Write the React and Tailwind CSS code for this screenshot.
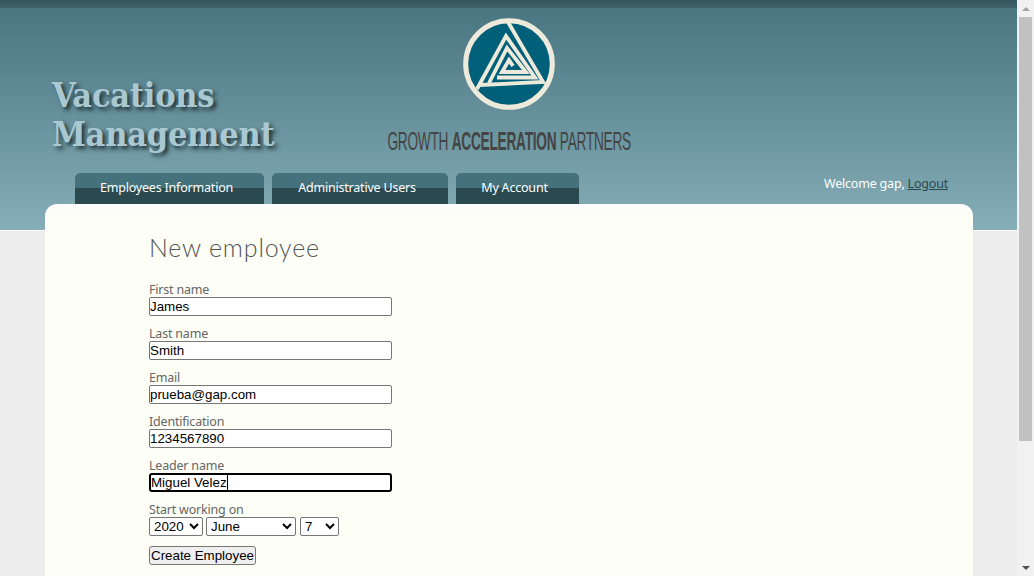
import React from 'react';

const tabs = [
  { label: 'Employees Information', width: 'w-[189px]' },
  { label: 'Administrative Users', width: 'w-[176px]' },
  { label: 'My Account', width: 'w-[123px]' },
];

const fields = [
  { label: 'First name', value: 'James' },
  { label: 'Last name', value: 'Smith' },
  { label: 'Email', value: 'prueba@gap.com' },
  { label: 'Identification', value: '1234567890' },
];

const Logo = () => (
  <svg width="94" height="94" viewBox="0 0 94 94" className="block">
    <circle cx="47" cy="47" r="43.3" fill="#00607a" stroke="#eeeadb" strokeWidth="5" />
    <g fill="none" stroke="#eeeadb" strokeWidth="3.8">
      <path d="M46 5 L81 65 L17 68" />
      <path d="M15 72 L44 19 L73 60.5 L35 60.5" />
      <path d="M27 66 L45 31 L64 55 L40 55 L47 43 L51 49" />
    </g>
  </svg>
);

const Scrollbar = () => (
  <div className="flex flex-col items-center w-[17px] h-[576px] bg-[#f1f1f1] shrink-0">
    <div className="h-[17px] flex items-center justify-center">
      <div className="w-0 h-0 border-x-[4px] border-x-transparent border-b-[4px] border-b-[#a3a3a3]" />
    </div>
    <div className="w-[13px] h-[424px] bg-[#c1c1c1]" />
    <div className="flex-1" />
    <div className="h-[17px] flex items-center justify-center">
      <div className="w-0 h-0 border-x-[4px] border-x-transparent border-t-[4px] border-t-[#505050]" />
    </div>
  </div>
);

export default function App() {
  return (
    <div className="flex h-[576px] overflow-hidden bg-[#ededed]">
      <div className="flex-1 min-w-0">
        <header className="h-[230px] bg-gradient-to-b from-[#47747f] to-[#86aeb8]">
          <div className="h-[8px] bg-gradient-to-b from-[#35545b] to-[#3f626b]" />
          <div className="flex h-[165px]">
            <div className="w-[387px] pl-[52px] pt-[68px]">
              <h1 className="w-[300px] text-[34px] leading-[39px] font-bold tracking-[-0.25px] text-[#a9c8d2] [font-family:'DejaVu_Serif_Condensed','DejaVu_Serif',serif] [text-shadow:3px_3px_4px_#203238]">
                Vacations<br />Management
              </h1>
            </div>
            <div className="flex flex-col items-center w-[244px] pt-[9px]">
              <Logo />
              <div className="mt-[16px] scale-x-[0.548] text-[25px] leading-[28px] tracking-[-0.5px] text-[#444444] whitespace-nowrap [font-family:'Liberation_Sans',sans-serif]">
                GROWTH <b>ACCELERATION</b> PARTNERS
              </div>
            </div>
          </div>
          <div className="flex h-[31px]">
            <nav className="flex gap-2 ml-[75px] tracking-[-0.2px] [font-family:'Noto_Sans',sans-serif]">
              {tabs.map((t) => (
                <a
                  key={t.label}
                  className={`${t.width} h-[31px] flex justify-center rounded-t-[5px] pt-[6px] pr-[6px] text-[12.5px] leading-[18px] text-white bg-[linear-gradient(#44717c_0,#44717c_15px,#2b4a50_15px)]`}
                >
                  {t.label}
                </a>
              ))}
            </nav>
            <div className="ml-auto mr-[69px] mt-[2px] text-[12.5px] leading-[18px] tracking-[-0.2px] text-white [font-family:'Noto_Sans',sans-serif]">
              Welcome gap, <a className="underline text-[#2b4a50]">Logout</a>
            </div>
          </div>
        </header>
        <div className="border-t border-white" />
        <main className="relative -mt-[27px] ml-[45px] w-[928px] h-[400px] rounded-t-[12px] bg-[#fdfef6] bg-[linear-gradient(#fcfcfc,#fdfef6_16px)] pl-[104px] pt-[27px] [font-family:'Noto_Sans',sans-serif]">
          <h2 className="text-[25px] leading-[32px] font-light tracking-[0.8px] text-[#555555] [font-family:'Lato',sans-serif]">
            New employee
          </h2>
          <form className="mt-[20px] text-[12.5px] tracking-[-0.2px] text-[#666666]">
            {fields.map((f) => (
              <div key={f.label} className="mb-[11px]">
                <label className="block leading-[14px] h-[14px]">{f.label}</label>
                <input
                  readOnly
                  value={f.value}
                  className="block w-[243px] h-[19px] px-0 tracking-normal text-[13.33px] text-black bg-white border border-[#767676] rounded-[2px] outline-none [font-family:'Liberation_Sans',sans-serif]"
                />
              </div>
            ))}
            <div className="mb-[11px]">
              <label className="block leading-[14px] h-[14px]">Leader name</label>
              <div className="flex items-center w-[243px] h-[19px] tracking-normal text-[13.33px] text-black bg-white border-2 border-black rounded-[3px] [font-family:'Liberation_Sans',sans-serif]">
                Miguel Velez
                <span className="w-px h-[15px] bg-black" />
              </div>
            </div>
            <div className="mb-[10px]">
              <label className="block leading-[14px] h-[14px]">Start working on</label>
              <div className="flex tracking-normal text-[13.33px] text-black [font-family:'Liberation_Sans',sans-serif]">
                <select className="w-[54px] h-[19px] mr-[3px] bg-white border border-[#767676] rounded-[2px] appearance-auto" defaultValue="2020">
                  <option>2020</option>
                </select>
                <select className="w-[90px] h-[19px] mr-[4px] bg-white border border-[#767676] rounded-[2px] appearance-auto" defaultValue="June">
                  <option>June</option>
                </select>
                <select className="w-[39px] h-[19px] bg-white border border-[#767676] rounded-[2px] appearance-auto" defaultValue="7">
                  <option>7</option>
                </select>
              </div>
            </div>
            <button
              type="button"
              className="block w-[107px] h-[19px] tracking-normal text-[13.33px] leading-[15px] text-black bg-[#efefef] border border-[#767676] rounded-[3px] [font-family:'Liberation_Sans',sans-serif]"
            >
              Create Employee
            </button>
          </form>
        </main>
      </div>
      <Scrollbar />
    </div>
  );
}
